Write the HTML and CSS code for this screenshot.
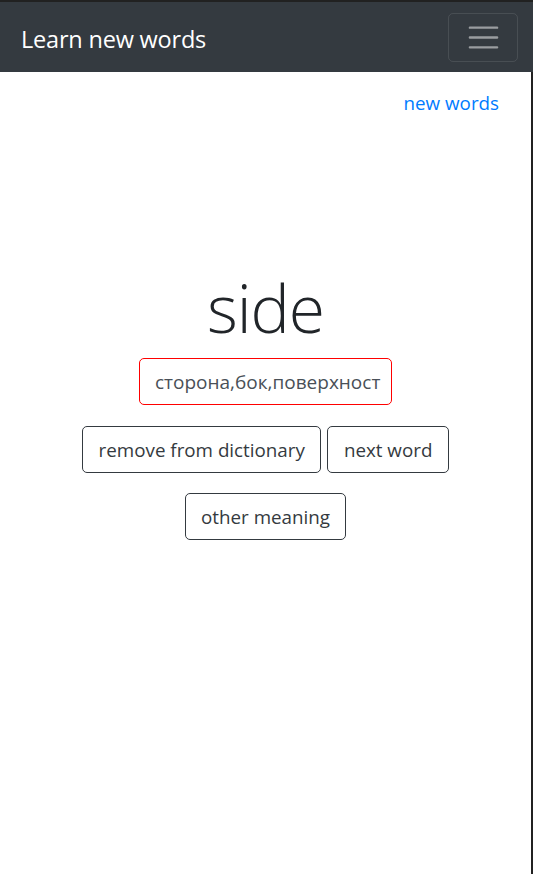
FILE: index.html
```html
<!DOCTYPE html>
<html lang="en">
<head>
<meta charset="utf-8">
<title>Learn new words</title>
<link rel="stylesheet" href="styles.css">
</head>
<body>
<div class="page">
  <nav class="navbar">
    <span class="brand">Learn new words</span>
    <button class="toggler" type="button" aria-label="Toggle navigation">
      <svg class="toggler-icon" viewBox="0 0 30 30" width="37" height="37" aria-hidden="true">
        <path d="M4 7h22M4 15h22M4 23h22" stroke="rgba(255,255,255,0.5)" stroke-width="2" stroke-linecap="round" fill="none"/>
      </svg>
    </button>
  </nav>
  <main class="main">
    <div class="top-links">
      <a class="link" href="#">new words</a>
    </div>
    <section class="card">
      <h1 class="word">side</h1>
      <div class="answer"><span>сторона,бок,поверхност</span></div>
      <div class="row">
        <button class="btn" type="button">remove from dictionary</button>
        <button class="btn" type="button">next word</button>
      </div>
      <div class="row row-last">
        <button class="btn" type="button">other meaning</button>
      </div>
    </section>
  </main>
</div>
</body>
</html>
```

FILE: styles.css
```css
html, body {
  margin: 0;
  padding: 0;
  height: 100%;
}
body {
  font-family: "Open Sans", "Noto Sans", sans-serif;
  background: #fff;
  color: #212529;
}
.page {
  min-height: 100%;
  display: flex;
  flex-direction: column;
  border-top: 2px solid #212121;
  box-sizing: border-box;
}
.navbar {
  height: 70px;
  background: #343a40;
  display: flex;
  align-items: center;
  justify-content: space-between;
  padding: 0 15px 0 21px;
  box-sizing: border-box;
}
.brand {
  color: #fff;
  font-size: 23.5px;
  line-height: 1;
  letter-spacing: -0.2px;
  padding-top: 5px;
}
.toggler {
  width: 70px;
  height: 49px;
  background: transparent;
  border: 1px solid rgba(255,255,255,0.1);
  border-radius: 5px;
  padding: 0;
  display: flex;
  align-items: center;
  justify-content: center;
}
.toggler-icon {
  display: block;
}
.main {
  flex: 1;
  border-right: 2px solid #212121;
  display: flex;
  flex-direction: column;
}
.top-links {
  display: flex;
  justify-content: flex-end;
  padding: 16px 32px 0 0;
}
.link {
  color: #007bff;
  text-decoration: none;
  font-size: 18.8px;
  line-height: 30px;
}
.card {
  display: flex;
  flex-direction: column;
  align-items: center;
  margin-top: 149px;
}
.word {
  margin: 0;
  font-weight: 300;
  font-size: 66px;
  line-height: 80px;
  color: #212529;
  letter-spacing: -1px;
}
.answer {
  margin-top: 11px;
  width: 253px;
  height: 47px;
  box-sizing: border-box;
  border: 1px solid rgb(255, 0, 0);
  border-radius: 5px;
  padding: 0 15px;
  display: flex;
  align-items: center;
  overflow: hidden;
  white-space: nowrap;
  color: #495057;
  font-size: 19px;
}
.row {
  display: flex;
  justify-content: center;
  gap: 6px;
  margin-top: 21px;
}
.row-last {
  margin-top: 20px;
}
.btn {
  font-family: inherit;
  font-size: 18.8px;
  line-height: 30px;
  padding: 7.5px 15.5px;
  height: 47px;
  box-sizing: border-box;
  color: #343a40;
  background: transparent;
  border: 1px solid #343a40;
  border-radius: 5px;
}
```
